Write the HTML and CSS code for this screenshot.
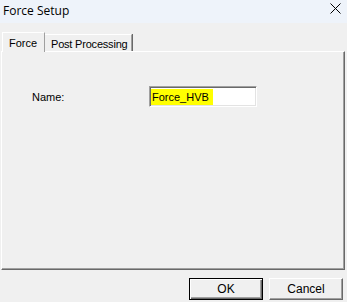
FILE: index.html
```html
<!DOCTYPE html>
<html lang="en">
<head>
    <meta charset="UTF-8">
    <title>Force Setup</title>
    <link rel="stylesheet" href="styles.css">
</head>
<body>
    <div class="window">
        <div class="titlebar">
            <span class="title">Force Setup</span>
            <svg class="close" width="11" height="11" viewBox="0 0 11 11">
                <path d="M0.5 0.5 L10.5 10.5 M10.5 0.5 L0.5 10.5" stroke="#000" stroke-width="1" fill="none"/>
            </svg>
        </div>
        <div class="dialog">
            <div class="tabs">
                <div class="tab active">Force</div>
                <div class="tab post">Post Processing</div>
            </div>
            <div class="tab-panel">
                <div class="field">
                    <label class="field-label">Name:</label>
                    <div class="textbox"><span class="highlight">Force_HVB</span></div>
                </div>
            </div>
            <div class="buttons">
                <button class="btn default">OK</button>
                <button class="btn">Cancel</button>
            </div>
        </div>
    </div>
</body>
</html>
```

FILE: styles.css
```css
body {
    margin: 0;
    background-color: #f0f0f0;
    font-family: "Liberation Sans", Arial, sans-serif;
    font-size: 11px;
    color: #000;
}
.window {
    width: 347px;
    height: 302px;
}
.titlebar {
    height: 23px;
    background-color: #eef3fa;
    display: flex;
    align-items: center;
    justify-content: space-between;
    padding: 0 6px 0 3px;
    box-sizing: border-box;
}
.title {
    font-family: "Open Sans", "Liberation Sans", sans-serif;
    font-size: 12px;
    margin-top: -3px;
}
.close {
    margin-top: -6px;
}
.dialog {
    padding: 9px 2px 0 1px;
}
.tabs {
    display: flex;
    align-items: flex-end;
    padding-left: 1px;
    height: 19px;
    position: relative;
    z-index: 1;
}
.tab {
    height: 17px;
    line-height: 18px;
    white-space: nowrap;
    letter-spacing: -0.2px;
    border-top: 1px solid #fff;
    border-left: 1px solid #fff;
    border-right: 1px solid #a0a0a0;
    box-shadow: 1px 0 0 #696969;
    box-sizing: border-box;
    background-color: #f0f0f0;
}
.tab.active {
    width: 43px;
    height: 20px;
    line-height: 21px;
    padding-left: 6px;
    margin-bottom: -1px;
    letter-spacing: 0;
    box-shadow: none;
}
.tab.post {
    width: 87px;
    border-left: none;
    padding-left: 6px;
}
.tab-panel {
    height: 219px;
    box-sizing: border-box;
    border-top: 1px solid #fff;
    border-left: 1px solid #fff;
    border-right: 1px solid #696969;
    border-bottom: 1px solid #696969;
    box-shadow: inset -1px -1px 0 #a0a0a0;
    padding: 34px 0 0 30px;
}
.field {
    display: flex;
    align-items: center;
}
.field-label {
    width: 117px;
    padding-top: 1px;
}
.textbox {
    width: 108px;
    height: 21px;
    box-sizing: border-box;
    background-color: #fff;
    border-top: 1px solid #a0a0a0;
    border-left: 1px solid #a0a0a0;
    border-right: 1px solid #fff;
    border-bottom: 1px solid #fff;
    box-shadow: inset 1px 1px 0 #696969, inset -1px -1px 0 #e3e3e3;
    padding: 2px 0 0 1px;
    font-size: 11px;
}
.highlight {
    display: inline-block;
    background-color: #ffff00;
    padding: 1px 4px 1px 1px;
    line-height: 14px;
}
.buttons {
    display: flex;
    justify-content: flex-end;
    gap: 6px;
    margin-top: 8px;
    padding-right: 2px;
}
.btn {
    width: 74px;
    height: 22px;
    margin: 0;
    padding: 0;
    font-family: "Liberation Sans", Arial, sans-serif;
    font-size: 12px;
    color: #000;
    background-color: #f0f0f0;
    border-top: 1px solid #fff;
    border-left: 1px solid #fff;
    border-right: 1px solid #696969;
    border-bottom: 1px solid #696969;
    box-shadow: inset -1px -1px 0 #a0a0a0;
}
.btn.default {
    border: 1px solid #000;
    box-shadow: inset 1px 1px 0 #fff, inset -1px -1px 0 #696969, inset -2px -2px 0 #a0a0a0;
}
```
